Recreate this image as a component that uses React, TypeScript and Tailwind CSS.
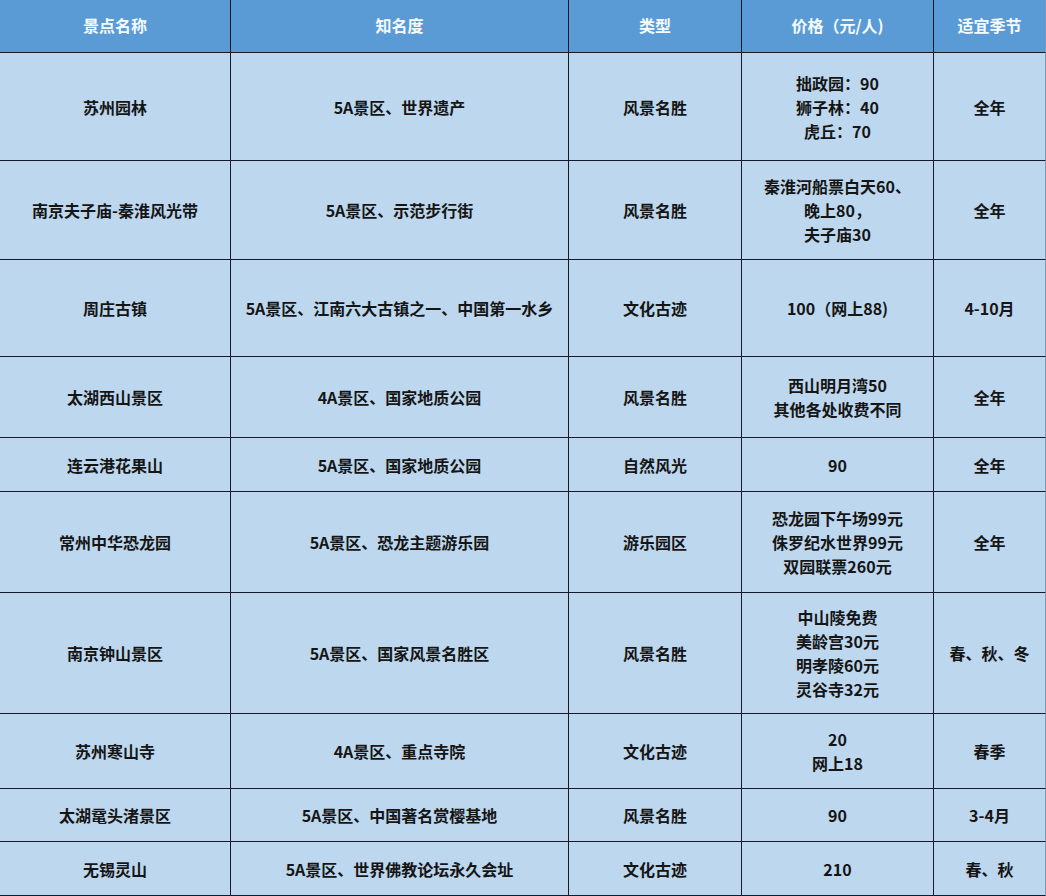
import React from "react";

const rows: { h: string; cells: string[][] }[] = [
  { h: "h-[108px]", cells: [["苏州园林"], ["5A景区、世界遗产"], ["风景名胜"], ["拙政园：90", "狮子林：40", "虎丘：70"], ["全年"]] },
  { h: "h-[99px]", cells: [["南京夫子庙-秦淮风光带"], ["5A景区、示范步行街"], ["风景名胜"], ["秦淮河船票白天60、", "晚上80，", "夫子庙30"], ["全年"]] },
  { h: "h-[97px]", cells: [["周庄古镇"], ["5A景区、江南六大古镇之一、中国第一水乡"], ["文化古迹"], ["100（网上88)"], ["4-10月"]] },
  { h: "h-[81px]", cells: [["太湖西山景区"], ["4A景区、国家地质公园"], ["风景名胜"], ["西山明月湾50", "其他各处收费不同"], ["全年"]] },
  { h: "h-[54px]", cells: [["连云港花果山"], ["5A景区、国家地质公园"], ["自然风光"], ["90"], ["全年"]] },
  { h: "h-[101px]", cells: [["常州中华恐龙园"], ["5A景区、恐龙主题游乐园"], ["游乐园区"], ["恐龙园下午场99元", "侏罗纪水世界99元", "双园联票260元"], ["全年"]] },
  { h: "h-[121px]", cells: [["南京钟山景区"], ["5A景区、国家风景名胜区"], ["风景名胜"], ["中山陵免费", "美龄宫30元", "明孝陵60元", "灵谷寺32元"], ["春、秋、冬"]] },
  { h: "h-[75px]", cells: [["苏州寒山寺"], ["4A景区、重点寺院"], ["文化古迹"], ["20", "网上18"], ["春季"]] },
  { h: "h-[53px]", cells: [["太湖鼋头渚景区"], ["5A景区、中国著名赏樱基地"], ["风景名胜"], ["90"], ["3-4月"]] },
  { h: "h-[54px]", cells: [["无锡灵山"], ["5A景区、世界佛教论坛永久会址"], ["文化古迹"], ["210"], ["春、秋"]] },
];

const widths = ["w-[231px]", "w-[338px]", "w-[173px]", "w-[192px]", "w-[112px]"];
const headers = ["景点名称", "知名度", "类型", "价格（元/人)", "适宜季节"];

export default function App() {
  return (
    <div
      className="w-[1046px] h-[896px] bg-[#bdd7ee] overflow-hidden"
      style={{ fontFamily: '"Noto Sans CJK SC", "Noto Sans", sans-serif' }}
    >
      <div className="flex h-[53px] bg-[#5b9bd5]">
        {headers.map((t, i) => (
          <div
            key={i}
            className={`${widths[i]} shrink-0 flex items-center justify-center border-b border-r border-[#161a2a] ${i === 4 ? "border-r-[#7d97b8]" : ""} text-[16px] font-bold text-[#f4fbff] pb-[2px]`}
          >
            {t}
          </div>
        ))}
      </div>
      {rows.map((r, ri) => (
        <div key={ri} className={`flex ${r.h}`}>
          {r.cells.map((lines, ci) => (
            <div
              key={ci}
              className={`${widths[ci]} shrink-0 flex flex-col items-center justify-center border-b border-r border-[#161a2a] ${ci === 4 ? "border-r-[#7d97b8]" : ""} text-[16px] leading-[24px] font-bold text-[#151515] text-center`}
            >
              {lines.map((l, li) => (
                <div key={li}>{l}</div>
              ))}
            </div>
          ))}
        </div>
      ))}
    </div>
  );
}
